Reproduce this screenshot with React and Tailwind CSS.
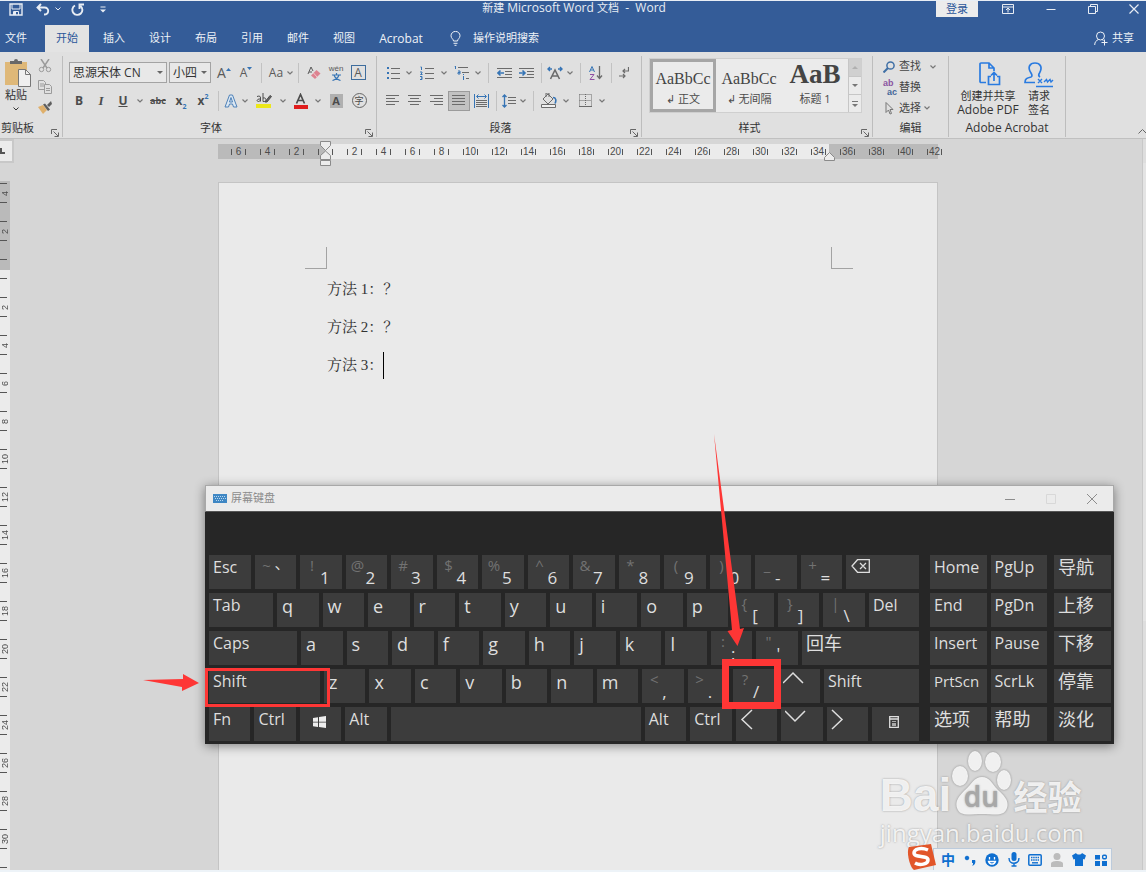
import React from 'react';

const RED = '#fe3635';
const H_MARKS = [6, 4, 2, 0, 2, 4, 6, 8, 10, 12, 14, 16, 18, 20, 22, 24, 26, 28, 30, 32, 34, 36, 38, 40, 42];
const V_MARKS = [4, 2, 0, 2, 4, 6, 8, 10, 12, 14, 16, 18, 20, 22, 24, 26, 28, 30, 32];
const TABS = ['插入', '设计', '布局', '引用', '邮件', '视图', 'Acrobat'];

// Small drawing helpers

function Icon({ w = 16, h = 16, children, className = '' }) {
  return (
    <svg
      width={w}
      height={h}
      viewBox={`0 0 ${w} ${h}`}
      fill="none"
      stroke="currentColor"
      aria-hidden="true"
      className={`shrink-0 ${className}`}
    >
      {children}
    </svg>
  );
}

function Chev({ className = 'w-3', label = '更多' }) {
  return (
    <button type="button" aria-label={label} className={`flex h-5 shrink-0 items-center justify-center text-[#777] ${className}`}>
      <Icon w={6} h={4}><path d="M.5 .5 3 3 5.500 .5" strokeWidth="1.200" /></Icon>
    </button>
  );
}

function Sep() {
  return <span className="mx-1 h-5 w-px shrink-0 bg-[#c2c2c2]" />;
}

function Tool({ label, className = 'w-[22px]', children }) {
  return (
    <button type="button" aria-label={label} className={`flex h-5 shrink-0 items-center justify-center ${className}`}>
      {children}
    </button>
  );
}

function Lines({ rows, color = '#6b6b6b' }) {
  return (
    <Icon w={14} h={14} className="block">
      <g stroke={color}>
        {rows.map(([x1, x2], i) => (
          <path key={i} d={`M${x1} ${1.5 + i * 3}H${x2}`} />
        ))}
      </g>
    </Icon>
  );
}

function Group({ label, className, launcher, children }) {
  return (
    <section aria-label={label} className={`relative flex shrink-0 flex-col border-r border-[#bdbdbd] ${className}`}>
      <div className="h-[63px]">{children}</div>
      <div className="flex h-[18px] items-center justify-center text-[11px] text-[#333]">{label}</div>
      {launcher && (
        <button type="button" aria-label={`${label}设置`} className="absolute right-[3px] bottom-0 text-[#666]">
          <Icon w={8} h={8}><path d="M.5 5V.5H6M2.500 2.500 7 7M7.500 3.500v4h-4" /></Icon>
        </button>
      )}
    </section>
  );
}

// Title bar and tabs

function TitleBar() {
  return (
    <header className="flex h-[25px] items-start border-t border-[#e8eef5] text-[#e8edf4]">
      <div className="flex h-4 flex-1 items-center pl-[9px]">
        <button type="button" aria-label="保存" className="w-[27px]">
          <Icon w={14} h={13} className="block">
            <path d="M1 1h12v11H1z" strokeWidth="1.400" />
            <path d="M3 1v5h8V1M4.500 12V8.500h5V12" />
            <path d="M5 9h2v3H5z" fill="currentColor" stroke="none" />
          </Icon>
        </button>
        <button type="button" aria-label="撤消" className="w-4">
          <Icon w={14} h={13} className="block">
            <path d="M5 1 1.500 4.500 5 8M2 4.500h6.500c5 0 5 7-.5 7" strokeWidth="1.900" />
          </Icon>
        </button>
        <button type="button" aria-label="撤消列表" className="w-[19px] pl-[3px]">
          <Icon w={6} h={4}><path d="M.5 .5 3 3 5.500 .5" /></Icon>
        </button>
        <button type="button" aria-label="重复" className="w-[29px]">
          <Icon w={13} h={13} className="block">
            <path d="M4 2.500a5 5 0 1 0 5.500 .5M8.500 6V1.500H13" strokeWidth="1.900" />
          </Icon>
        </button>
        <button type="button" aria-label="自定义快速访问工具栏">
          <Icon w={6} h={7} className="block">
            <path d="M.5 1H5.500" />
            <path d="M0 3.500h6L3 6.500z" fill="currentColor" stroke="none" />
          </Icon>
        </button>
      </div>
      <h1 className="h-4 text-[12px] leading-[13px] whitespace-pre">
        <span className="text-[11px]">新建</span> Microsoft Word <span className="text-[11px]">文档</span>{'  -  '}Word
      </h1>
      <div className="flex h-4 flex-1 items-center justify-end pr-[7px]">
        <button type="button" className="mr-6 h-4 w-[42px] bg-[#ececec] text-[11px] leading-[14px] text-[#2b579a]">登录</button>
        <button type="button" aria-label="功能区显示选项" className="w-11">
          <Icon w={12} h={10}>
            <path d="M.5 .5h11v9H.5zM.5 3h11M6 8.500V4.500M4 6l2-2 2 2" />
          </Icon>
        </button>
        <button type="button" aria-label="最小化" className="w-[42px]">
          <Icon w={10} h={10}><path d="M.5 5.500h9" /></Icon>
        </button>
        <button type="button" aria-label="还原" className="w-[41px]">
          <Icon w={10} h={10}><path d="M.5 2.500h7v7h-7zM2.500 2V.5h7v7H8" /></Icon>
        </button>
        <button type="button" aria-label="关闭">
          <Icon w={10} h={10}><path d="m.5 .5 9 9M9.500 .5l-9 9" strokeWidth="1.200" /></Icon>
        </button>
      </div>
    </header>
  );
}

function TabRow() {
  return (
    <nav className="flex h-[27px] items-stretch text-[11px] text-[#eef2f7]">
      <button type="button" className="w-[45px] pr-[13px] text-center">文件</button>
      <button type="button" className="mr-[2px] w-[44px] bg-[#e3e3e3] text-[#2b579a]">开始</button>
      {TABS.map((t) => (
        <button type="button" key={t} className={t === 'Acrobat' ? 'w-[68px] text-[12px]' : 'w-[46px]'}>{t}</button>
      ))}
      <label className="ml-[15px] flex items-center gap-3">
        <Icon w={11} h={15}>
          <path d="M3.500 10C3.500 8 1 7.500 1 4.700a4.500 4.300 0 0 1 9 0C10 7.500 7.500 8 7.500 10zM3.500 12.300h4M4.500 14.300h2" />
        </Icon>
        <input
          aria-label="操作说明搜索"
          placeholder="操作说明搜索"
          className="w-24 bg-transparent outline-none placeholder:text-[#eef2f7]"
        />
      </label>
      <button type="button" className="ml-auto flex items-center gap-1 pr-3">
        <Icon w={14} h={15}>
          <circle cx="6.500" cy="5" r="4" />
          <path d="M.7 14c0-3 1.500-4.500 3.800-5.500M8 8.500l1.500 1M10.500 8.500v6M7.500 11.500h6" />
        </Icon>
        共享
      </button>
    </nav>
  );
}

// Ribbon groups

function ClipboardGroup() {
  return (
    <Group label="剪贴板" className="w-[63px] [&>div:nth-child(2)]:justify-start [&>div:nth-child(2)]:pl-[1px]" launcher>
      <div className="flex">
        <button type="button" className="flex w-8 flex-col items-center pt-[3px] text-[11px] leading-4 text-[#333]">
          <Icon w={26} h={28} className="ml-1 block">
            <path d="M0 3h22v23H0z" fill="#dfb878" stroke="none" />
            <path d="M5 5V2h4a2 2 0 0 1 4 0h4v3z" fill="#686868" stroke="none" />
            <path d="M13.500 10.500h7l5 5v12h-12z" fill="#efefef" stroke="#777" />
            <path d="M20.500 10.500v5h5" stroke="#777" />
          </Icon>
          <span>粘贴</span>
          <Icon w={6} h={4} className="mt-1"><path d="M.5 .5 3 3 5.500 .5" /></Icon>
        </button>
        <div className="flex flex-col gap-[7px] pt-[3px] pl-[6px] text-[#9b9b9b]">
          <button type="button" aria-label="剪切">
            <Icon w={14} h={14} className="block">
              <path d="M3 0l6 9M11 0 5 9" strokeWidth="1.500" />
              <circle cx="3.500" cy="10.500" r="2.200" />
              <circle cx="10.500" cy="10.500" r="2.200" />
            </Icon>
          </button>
          <button type="button" aria-label="复制">
            <Icon w={14} h={14} className="block">
              <path d="M.5 .5h5l2 2v7h-7zM2 4h4M2 6h4" />
              <path d="M6.500 4.500h5l2 2v7h-7zM8 8.500h4M8 10.500h4" fill="#e0e0e0" />
            </Icon>
          </button>
          <button type="button" aria-label="格式刷">
            <Icon w={14} h={13} className="block">
              <path d="m0 6 5-2 4 5-4 4z" fill="#dfb06c" stroke="none" />
              <path d="m5 3.500 2-1 5 6-2 1.500zM9 4l4-4 1 3-3 3z" fill="#5e5e5e" stroke="none" />
            </Icon>
          </button>
        </div>
      </div>
    </Group>
  );
}

function SelectBox({ label, value, className }) {
  return (
    <div className={`relative shrink-0 ${className}`}>
      <select aria-label={label} className="block h-[21px] w-full appearance-none border border-[#a3a3a3] bg-[#e8e8e8] pl-[3px] text-[12px] leading-[18px] text-[#333]">
        <option>{value}</option>
      </select>
      <svg width="6" height="4" className="pointer-events-none absolute top-[9px] right-1"><path d="M0 0h6L3 3z" fill="#666" /></svg>
    </div>
  );
}

function FontGroup() {
  return (
    <Group label="字体" className="w-[314px] [&>div:nth-child(2)]:pr-[17px]" launcher>
      <div className="flex h-[29px] items-center pt-1 pl-[6px] text-[#5a5a5a]">
        <SelectBox label="字体名称" value="思源宋体 CN" className="w-[98px]" />
        <SelectBox label="字号" value="小四" className="ml-[2px] w-[42px]" />
        <Tool label="增大字号" className="ml-[2px] w-[22px] text-[14px]">
          A<Icon w={5} h={10}><path d="M0 3h5L2.500 0z" fill="#3674b5" stroke="none" /></Icon>
        </Tool>
        <Tool label="减小字号" className="w-[22px] text-[12px]">
          A<Icon w={5} h={12}><path d="M0 0h5L2.500 3z" fill="#3674b5" stroke="none" /></Icon>
        </Tool>
        <Sep />
        <Tool label="更改大小写" className="w-5 text-[12px]">Aa</Tool>
        <Chev className="w-2" />
        <Sep />
        <Tool label="清除所有格式">
          <Icon w={14} h={14}>
            <path d="M1 8 4 1l2 4M2 6h3" />
            <path d="M4 9.500 9.500 4l4 3.500L8 13z" fill="#dd8290" stroke="none" />
            <path d="m6.500 7 3.500 4" stroke="#f1c6cc" />
          </Icon>
        </Tool>
        <Tool label="拼音指南" className="w-[22px] flex-col">
          <span className="font-['Liberation_Sans',sans-serif] text-[8px] leading-[9px]">wén</span>
          <Icon w={9} h={8}>
            <path d="M4.500 0v1.500M0 2h9M2 2c1 3 3 4.500 6.500 5.500M7 2C6 5 4 6.500 .5 7.500" stroke="#3674b5" strokeWidth="1.200" />
          </Icon>
        </Tool>
        <Tool label="字符边框">
          <span className="h-[15px] w-[15px] border border-[#3e6d9d] text-center text-[12px] leading-[13px]">A</span>
        </Tool>
      </div>
      <div className="flex h-[31px] items-center pl-[5px] text-[#4c4c4c]">
        <Tool label="加粗" className="w-[22px] text-[12px] font-bold">B</Tool>
        <Tool label="倾斜" className="w-[22px] font-['Liberation_Serif',serif] text-[13px] font-bold italic">I</Tool>
        <Tool label="下划线" className="w-[22px] text-[12px] font-bold underline">U</Tool>
        <Chev />
        <Tool label="删除线" className="w-6 text-[9px] font-bold line-through">abc</Tool>
        <Tool label="下标" className="w-[22px] text-[12px] font-bold">
          x<span className="self-end text-[7px] leading-[9px] text-[#3674b5]">2</span>
        </Tool>
        <Tool label="上标" className="w-[22px] text-[12px] font-bold">
          x<span className="self-start text-[7px] leading-[12px] text-[#3674b5]">2</span>
        </Tool>
        <Sep />
        <Tool label="文本效果" className="w-4">
          <Icon w={14} h={14}>
            <path d="M1 13 5.500 1h3L13 13H9.500l-1-3h-3l-1 3z" stroke="#4e81b8" fill="#dce8f3" />
            <path d="M5.500 8 7 3.500 8.500 8z" stroke="#4e81b8" />
          </Icon>
        </Tool>
        <Chev />
        <Tool label="突出显示" className="w-[26px]">
          <Icon w={16} h={15}>
            <path d="M1 3.500c3-1 3.500 0 3.500 1.500v3.500M4.500 6C1 5.500 0 8.500 2.500 8.500L4.500 7.500M7 0v8.500c4 1 4-4.500 0-3.500" />
            <path d="m9 9 5-6.500 1.500 1L11 9z" fill="#666" />
            <path d="M0 11h15v4H0z" fill="#ece71a" stroke="none" />
          </Icon>
        </Tool>
        <Chev />
        <Tool label="字体颜色" className="w-6">
          <Icon w={14} h={16}>
            <path d="m2.500 10.500 4-9 4 9M4 7.500h5" strokeWidth="1.700" />
            <path d="M0 12h14v4H0z" fill="#e01d1d" stroke="none" />
          </Icon>
        </Tool>
        <Chev className="w-[10px]" />
        <Tool label="字符底纹" className="w-[26px]">
          <span className="h-[14px] w-[13px] bg-[#b0b0b0] text-center text-[11px] leading-[14px] font-bold">A</span>
        </Tool>
        <Tool label="带圈字符" className="w-5">
          <span className="h-[15px] w-[15px] rounded-full border border-[#666] text-center text-[9px] leading-[13px]">字</span>
        </Tool>
      </div>
    </Group>
  );
}

function ParagraphGroup() {
  return (
    <Group label="段落" className="w-[265px] [&>div:nth-child(2)]:pr-[17px]" launcher>
      <div className="flex h-[29px] items-center pt-1 pl-[7px] text-[#6b6b6b]">
        <Tool label="项目符号" className="w-[18px]">
          <Icon w={13} h={14}>
            <path d="M0 1h2v2H0zM0 6h2v2H0zM0 11h2v2H0z" fill="#3674b5" stroke="none" />
            <path d="M4 2.500h9M4 7.500h9M4 12.500h9" />
          </Icon>
        </Tool>
        <Chev className="w-[14px]" />
        <Tool label="编号">
          <Icon w={14} h={14}>
            <path d="M.5 1h1v3M0 6h2v1L.5 8.500H2.500M0 10.500h2v3H0M2 12H1" stroke="#3674b5" />
            <path d="M5 2.500h9M5 7.500h9M5 12.500h9" />
          </Icon>
        </Tool>
        <Chev className="w-3" />
        <Tool label="多级列表">
          <Icon w={15} h={14}>
            <path d="M.5 0h1v3M4 5h2v3H4V6.500h2M9.500 10v4M9.500 8v1" stroke="#3674b5" />
            <path d="M4 1.500h10M8 6.500h7M12 12.500h3" />
          </Icon>
        </Tool>
        <Chev className="w-3" />
        <Sep />
        <Tool label="减少缩进量">
          <Icon w={15} h={12}>
            <path d="M0 1.500h15M8 4.500h7M8 7.500h7M0 10.500h15" />
            <path d="M1 6h6M3.500 3.500 1 6l2.500 2.500" stroke="#3674b5" strokeWidth="1.600" />
          </Icon>
        </Tool>
        <Tool label="增加缩进量">
          <Icon w={15} h={12}>
            <path d="M0 1.500h15M8 4.500h7M8 7.500h7M0 10.500h15" />
            <path d="M0 6h6M3.500 3.500 6 6 3.500 8.500" stroke="#3674b5" strokeWidth="1.600" />
          </Icon>
        </Tool>
        <Sep />
        <Tool label="中文版式" className="w-[18px]">
          <Icon w={16} h={14}>
            <path d="m3.500 13 4.500-9 4.500 9M5 10h6" strokeWidth="1.600" />
            <path d="M5 3H1M3 1 1 3l2 2M11 3h4M13 1l2 2-2 2" stroke="#3674b5" strokeWidth="1.400" />
          </Icon>
        </Tool>
        <Chev />
        <Sep />
        <Tool label="排序">
          <Icon w={14} h={14}>
            <path d="m.5 6 2.500-5.500L5.500 6M1.500 4h3" stroke="#3674b5" />
            <path d="M1 8.500h4l-4 5h4.500" stroke="#8f4fa3" />
            <path d="M10.500 0v12M8 9.500l2.500 3 2.500-3" strokeWidth="1.300" />
          </Icon>
        </Tool>
        <Sep />
        <Tool label="显示编辑标记" className="w-4">
          <Icon w={10} h={12}>
            <path d="M9.500 0v4H4M6 2 4 4l2 2M0 9h6M4 7l2 2-2 2" strokeWidth="1.200" />
          </Icon>
        </Tool>
      </div>
      <div className="flex h-[31px] items-center pl-[5px] text-[#6b6b6b]">
        <Tool label="左对齐"><Lines rows={[[0, 13], [0, 9], [0, 13], [0, 9]]} /></Tool>
        <Tool label="居中"><Lines rows={[[0, 13], [2, 11], [0, 13], [2, 11]]} /></Tool>
        <Tool label="右对齐"><Lines rows={[[0, 13], [4, 13], [0, 13], [4, 13]]} /></Tool>
        <Tool label="两端对齐" className="w-[22px] border border-[#9b9b9b] bg-[#c2c2c2]">
          <Lines rows={[[0, 13], [0, 13], [0, 13], [0, 13]]} />
        </Tool>
        <Tool label="分散对齐">
          <Icon w={15} h={14}>
            <path d="M.5 0v14M14.500 0v14M3 2.500h9M4.500 .5l-2 2 2 2M10.500 .5l2 2-2 2" stroke="#3674b5" />
            <path d="M2 6.500h11M2 8.500h11M2 10.500h11M2 12.500h11" />
          </Icon>
        </Tool>
        <Sep />
        <Tool label="行距" className="w-4">
          <Icon w={14} h={14}>
            <path d="M2.500 1v12M.5 3l2-2 2 2M.5 11l2 2 2-2" stroke="#3674b5" strokeWidth="1.300" />
            <path d="M6 3.500h8M6 6.500h8M6 9.500h8" />
          </Icon>
        </Tool>
        <Chev />
        <Sep />
        <Tool label="底纹">
          <Icon w={16} h={15}>
            <path d="m2 6 5-5 5 5-5 5zM5 4V0h3v4" />
            <path d="M12 4.500c3 0 3.500 3 2 6" stroke="#3674b5" strokeWidth="1.600" />
            <path d="M.5 11.500h14v3H.5z" fill="#f0f0f0" />
          </Icon>
        </Tool>
        <Chev />
        <Tool label="边框" className="w-[26px]">
          <Icon w={13} h={13}>
            <path d="M.5 .5h12M.5 .5v12M12.500 .5v12M6.500 0v12M.5 6.500h12" strokeDasharray="1 1" />
            <path d="M0 12.500h13" />
          </Icon>
        </Tool>
        <Chev className="w-2" />
      </div>
    </Group>
  );
}

function StyleCard({ sample, name, big, selected }) {
  return (
    <button
      type="button"
      className={`flex h-[53px] w-[66px] flex-col items-center border-3 ${selected ? 'border-[#a6a6a6]' : 'border-transparent'}`}
    >
      <span
        className={`flex h-[29px] shrink-0 items-center font-['Liberation_Serif',serif] leading-none whitespace-nowrap text-[#444] ${big ? 'pb-1 text-[27px] font-bold' : 'pt-1 text-[16px]'}`}
      >
        {sample}
      </span>
      <span className="text-[11px] leading-4 whitespace-nowrap text-[#4a4a4a]">{name}</span>
    </button>
  );
}

function StylesGroup() {
  return (
    <Group label="样式" className="w-[231px] [&>div:nth-child(2)]:pr-[15px]" launcher>
      <div className="mt-[2px] ml-[7px] flex w-[213px] border border-[#cfcfcf] bg-[#ebebeb]">
        <StyleCard sample="AaBbCc" name="↲ 正文" selected />
        <StyleCard sample="AaBbCc" name="↲ 无间隔" />
        <StyleCard sample="AaB" name="标题 1" big />
        <div className="flex flex-1 flex-col divide-y divide-[#c6c6c6] border-l border-[#c6c6c6] text-[#777]">
          <button type="button" aria-label="上一行" className="flex flex-1 items-center justify-center bg-[#d0d0d0] text-[#b0b0b0]">
            <Icon w={6} h={3}><path d="M0 3h6L3 0z" fill="currentColor" stroke="none" /></Icon>
          </button>
          <button type="button" aria-label="下一行" className="flex flex-1 items-center justify-center">
            <Icon w={6} h={3}><path d="M0 0h6L3 3z" fill="currentColor" stroke="none" /></Icon>
          </button>
          <button type="button" aria-label="其他样式" className="flex flex-1 items-center justify-center">
            <Icon w={6} h={6}><path d="M0 .5h6" /><path d="M0 3h6L3 6z" fill="currentColor" stroke="none" /></Icon>
          </button>
        </div>
      </div>
    </Group>
  );
}

function EditGroup() {
  return (
    <Group label="编辑" className="w-[76px]">
      <div className="flex flex-col pl-[10px] text-[11px] text-[#444]">
        <div className="flex h-[21px] items-center">
          <button type="button" className="flex items-center gap-1">
            <Icon w={12} h={12}>
              <circle cx="7.500" cy="4.500" r="3.600" stroke="#3f6fa5" strokeWidth="1.500" />
              <path d="m5 7-4.500 4.500" stroke="#3f6fa5" strokeWidth="2" />
            </Icon>
            查找
          </button>
          <Chev className="ml-[6px] w-3" />
        </div>
        <button type="button" className="flex h-[21px] items-center gap-[2px]">
          <span className="w-[14px] font-['Liberation_Sans',sans-serif] text-[9px] leading-[9px] font-bold">
            <span className="block text-left text-[#8b55a0]">ab</span>
            <span className="block text-right text-[#44679a]">ac</span>
          </span>
          替换
        </button>
        <div className="flex h-5 items-center">
          <button type="button" className="flex items-center gap-1">
            <Icon w={12} h={13}>
              <path d="M3 .5v10l2.500-2.500L7 12l1.500-.5-1.500-4h3z" stroke="#777" />
            </Icon>
            选择
          </button>
          <Chev />
        </div>
      </div>
    </Group>
  );
}

function AcrobatGroup() {
  return (
    <Group label="Adobe Acrobat" className="w-[117px] [&>div:nth-child(2)]:text-[12px]">
      <div className="flex pt-[6px] pl-[9px] text-[11px] leading-[14px] text-[#333]">
        <button type="button" className="flex w-[60px] flex-col items-center">
          <Icon w={22} h={24} className="mb-[3px] ml-1 block text-[#2a7be0]">
            <path d="M7 20.500H2A1 1 0 0 1 1 19.500V2a1 1 0 0 1 1-1h8l5 5v3M10 1v5h5" strokeWidth="1.700" />
            <path d="M12 14.500H9.500v8h11v-8H18M15 19v-8M12 13.500l3-3 3 3" strokeWidth="1.700" />
          </Icon>
          <span className="whitespace-nowrap">创建并共享</span>
          <span className="text-[12px] whitespace-nowrap">Adobe PDF</span>
        </button>
        <button type="button" className="ml-[6px] flex w-[30px] flex-col items-center">
          <Icon w={30} h={27} className="block text-[#2a7be0]">
            <path d="M11 20.500H1c0-4 2-4.500 6-5.500 1.500-.5 1-2.500 0-4C3 5 6 1 11 1s8 4 4.500 10c-1 1.500-1 3 .5 4" strokeWidth="1.700" />
            <path d="m14 17 4 4M18 17l-4 4M20 20l2.500-2.500 1 2.500 2.500-2.500 1 2.500 2-2M12 24.500h17" strokeWidth="1.400" />
          </Icon>
          <span>请求</span>
          <span>签名</span>
        </button>
      </div>
    </Group>
  );
}

function Ribbon() {
  return (
    <div className="relative flex h-[87px] items-start border-b border-[#c0c0c0] bg-[#e0e0e0] pt-1">
      <ClipboardGroup />
      <FontGroup />
      <ParagraphGroup />
      <StylesGroup />
      <EditGroup />
      <AcrobatGroup />
      <button type="button" aria-label="折叠功能区" className="mr-[-1px] ml-auto self-end pb-1 text-[#666]">
        <Icon w={9} h={5} className="block"><path d="m.5 4.500 4-4 4 4" /></Icon>
      </button>
    </div>
  );
}

// Document area

function HorizontalRuler() {
  return (
    <div className="relative mt-[5px] flex h-[15px] bg-[linear-gradient(to_right,#bababa_108px,#ebebeb_108px,#ebebeb_611px,#bababa_611px)] pl-[6px] font-['Liberation_Sans',sans-serif] text-[10px] text-[#4c4c4c]">
      {H_MARKS.map((n, i) => (
        <span key={i} className="flex w-[29px] shrink-0 items-center justify-center">
          <span className="flex h-[6px] w-[15px] items-center justify-center border-x border-[#555] leading-none">
            {n || ''}
          </span>
        </span>
      ))}
      <svg width="11" height="26" className="absolute top-[-3px] left-[102px]" fill="#ececec" stroke="#8a8a8a">
        <path d="M.5 .5h10v4l-5 5-5-5zM.5 18.500v-4l5-4.500 5 4.500v4zM.5 19.500h10v5H.5z" />
      </svg>
      <svg width="11" height="10" className="absolute top-[8px] left-[606px]" fill="#ececec" stroke="#8a8a8a">
        <path d="M.5 8.500v-3l5-5 5 5v3z" />
      </svg>
    </div>
  );
}

function VerticalRuler() {
  return (
    <div className="mt-[18px] min-h-0 w-[10px] flex-1 overflow-hidden bg-[linear-gradient(#bababa_89px,#ebebeb_89px)] font-['Liberation_Sans',sans-serif] text-[9px] text-[#4c4c4c]">
      <div className="-mt-[7px]">
        {V_MARKS.map((n, i) => (
          <div key={i} className="flex h-[38px] items-center">
            <div className="flex h-5 w-[7px] items-center border-y border-[#555]">
              <span className="h-3 w-[10px] shrink-0 rotate-180 text-center leading-[10px] [writing-mode:vertical-rl]">{n || ''}</span>
            </div>
          </div>
        ))}
      </div>
    </div>
  );
}

function Workspace() {
  return (
    <main className="flex min-h-0 flex-1 bg-[#d6d6d6]">
      <div className="flex w-[14px] shrink-0 flex-col">
        <button type="button" aria-label="制表符" className="flex h-6 items-center border-2 border-l-0 border-[#c8c8c8] bg-[#ebebeb] text-[#555]">
          <Icon w={6} h={6}><path d="M1 0v5h4" strokeWidth="2" /></Icon>
        </button>
        <VerticalRuler />
      </div>
      <div className="mx-auto flex w-full max-w-[720px] flex-col">
        <HorizontalRuler />
        <article className="mt-[23px] flex-1 border border-b-0 border-[#c4c4c4] bg-[#eaeaea] pt-16">
          <div className="flex justify-between pr-[84px] pl-[86px]">
            <span className="h-[22px] w-[22px] border-r border-b border-[#a3a3a3]" />
            <span className="h-[22px] w-[22px] border-b border-l border-[#a3a3a3]" />
          </div>
          <div className="px-[108px] pt-px font-['Liberation_Serif','Noto_Serif_CJK_SC','Noto_Sans_CJK_SC',serif] text-[15px] leading-[38px] text-[#333]">
            <p>方法 1：？</p>
            <p>方法 2：？</p>
            <p className="flex items-center">
              方法 3：<span className="h-[27px] w-px bg-black" />
            </p>
          </div>
        </article>
      </div>
      <div className="w-1 shrink-0 border-l border-[#c8c8c8] bg-[#dedede]">
        <div className="mt-6 h-[458px] bg-[#e4e4e4]" />
      </div>
    </main>
  );
}

// On-screen keyboard

function Key({ children, className = 'flex-1' }) {
  return (
    <button type="button" className={`flex h-[34px] min-w-0 items-start bg-[#3c3c3c] pl-1 text-[16px] leading-6 whitespace-nowrap text-[#dedede] ${className}`}>
      {children}
    </button>
  );
}

function Letter({ children }) {
  return <Key><span className="pl-px text-[18px] leading-[26px]">{children}</span></Key>;
}

function DualKey({ upper, lower, high }) {
  return (
    <Key>
      <span className="w-4 shrink-0 text-[15px] leading-5 text-[#727272]">{upper}</span>
      <span className={high ? 'text-[15px] leading-4' : 'self-end pb-px text-[17px] leading-5'}>{lower}</span>
    </Key>
  );
}

function CjkKey({ children, className }) {
  return <Key className={className}><span className="text-[18px]">{children}</span></Key>;
}

function Arrow({ d, label }) {
  return (
    <Key>
      <svg width="22" height="24" fill="none" stroke="#dedede" strokeWidth="1.500" role="img" aria-label={label}>
        <path d={d} />
      </svg>
    </Key>
  );
}

const NUMBER_ROW = [['!', '1'], ['@', '2'], ['#', '3'], ['$', '4'], ['%', '5'], ['^', '6'], ['&', '7'], ['*', '8'], ['(', '9'], [')', '0'], ['_', '-'], ['+', '=']];

function KeyRow({ children }) {
  return <div className="flex gap-1">{children}</div>;
}

function Keyboard() {
  return (
    <section aria-label="屏幕键盘" className="absolute top-[485px] left-[205px] w-[909px] bg-[#262626] shadow-[0_2px_10px_rgba(0,0,0,0.45)]">
      <header className="flex h-[27px] items-center border border-[#a8a8a8] border-b-[#555] bg-[#ebebeb] pl-[7px] text-[11px] text-[#8c8c8c]">
        <Icon w={14} h={9}>
          <path d="M0 0h14v9H0z" fill="#3f87c4" stroke="none" />
          <path d="M1 2.500h12M2 4.500h11M3 6.500h8" stroke="#b8d7ee" strokeDasharray="1 1" />
        </Icon>
        <h2 className="ml-1">屏幕键盘</h2>
        <div className="ml-auto flex pr-4">
          <button type="button" aria-label="最小化" className="w-[41px]"><Icon w={10} h={10}><path d="M0 5.500h10" /></Icon></button>
          <button type="button" aria-label="最大化" className="w-[41px] text-[#d8d8d8]"><Icon w={10} h={10}><path d="M.5 .5h9v9h-9z" /></Icon></button>
          <button type="button" aria-label="关闭"><Icon w={10} h={10}><path d="m0 0 10 10M10 0 0 10" /></Icon></button>
        </div>
      </header>
      <div className="flex pt-[43px] pr-[3px] pb-[3px] pl-1">
        <div className="flex min-w-0 flex-1 flex-col gap-1">
          <KeyRow>
            <Key>Esc</Key>
            <DualKey upper="~" lower="、" high />
            {NUMBER_ROW.map(([u, l]) => <DualKey key={u} upper={u} lower={l} />)}
            <Key className="w-[73px] pt-1">
              <Icon w={22} h={14} className="ml-[1px]">
                <path d="M6.500 .7H18.300v12.600H6.500L1 7zM9 4l6 6M15 4l-6 6" strokeWidth="1.300" />
              </Icon>
            </Key>
          </KeyRow>
          <KeyRow>
            <Key className="w-16">Tab</Key>
            {[...'qwertyuiop'].map((c) => <Letter key={c}>{c}</Letter>)}
            <DualKey upper="{" lower="[" />
            <DualKey upper="}" lower="]" />
            <DualKey upper="|" lower="\" />
            <Key className="w-[50px]">Del</Key>
          </KeyRow>
          <KeyRow>
            <Key className="w-[88px]">Caps</Key>
            {[...'asdfghjkl'].map((c) => <Letter key={c}>{c}</Letter>)}
            <DualKey upper=":" lower=";" />
            <DualKey upper={'"'} lower="'" />
            <CjkKey className="w-[117px]">回车</CjkKey>
          </KeyRow>
          <KeyRow>
            <Key className="w-[111px]">Shift</Key>
            {[...'zxcvbnm'].map((c) => <Letter key={c}>{c}</Letter>)}
            <DualKey upper="<" lower="," />
            <DualKey upper=">" lower="." />
            <DualKey upper="?" lower="/" />
            <Arrow label="上" d="m0 14 10-10 10 10" />
            <Key className="w-[95px]">Shift</Key>
          </KeyRow>
          <KeyRow>
            <Key>Fn</Key>
            <Key>Ctrl</Key>
            <Key className="flex-1 justify-center pt-[9px]">
              <Icon w={13} h={12} className="mr-[6px]">
                <path d="m0 2 5-.8v4.500H0zM6 1l7-1v5.700H6zM0 6.500h5V11l-5-.8zM6 6.500h7V12l-7-1z" fill="#ededed" stroke="none" />
              </Icon>
            </Key>
            <Key>Alt</Key>
            <Key className="w-[250px]" />
            <Key>Alt</Key>
            <Key>Ctrl</Key>
            <Arrow label="左" d="M12 3 2 12.500 12 22" />
            <Arrow label="下" d="m0 4 10 10L20 4" />
            <Arrow label="右" d="m1 3 10 9.500L1 22" />
            <Key className="w-[47px] justify-center pt-[9px]">
              <Icon w={10} h={12} className="mr-[6px]">
                <path d="M.7 .7h8.600v10.600H.7zM.7 3h8.600" strokeWidth="1.300" />
                <path d="M3 5h4v1H3zM3 7h4v3H3z" fill="#aaa" stroke="none" />
              </Icon>
            </Key>
          </KeyRow>
        </div>
        <div className="ml-[11px] grid w-[117px] grid-cols-2 gap-1">
          <Key>Home</Key>
          <Key>PgUp</Key>
          <Key>End</Key>
          <Key>PgDn</Key>
          <Key>Insert</Key>
          <Key>Pause</Key>
          <Key><span className="text-[15px]">PrtScn</span></Key>
          <Key>ScrLk</Key>
          <CjkKey>选项</CjkKey>
          <CjkKey>帮助</CjkKey>
        </div>
        <div className="ml-[7px] flex w-[57px] flex-col gap-1">
          {['导航', '上移', '下移', '停靠', '淡化'].map((t) => <CjkKey key={t} className="w-full">{t}</CjkKey>)}
        </div>
      </div>
      {/* red frames around Shift and the ?/ key */}
      <span className="absolute top-[183px] left-0 h-[39px] w-[125px] border-3 border-[#fe3635]" />
      <span className="absolute top-[174px] left-[517px] h-[50px] w-[59px] border-7 border-[#fe3635]" />
      <svg width="30" height="213" className="absolute top-[-51px] left-[509px]">
        <path d="M0 0 26 195l4-1-6.500 18L13.500 197l4.500-1z" fill={RED} />
      </svg>
      <svg width="56" height="18" className="absolute top-[189px] left-[-62px]">
        <path d="M0 6 40 5V0l16 9-17 8v-4z" fill={RED} />
      </svg>
    </section>
  );
}

// Watermark and input method bar

function Watermark() {
  return (
    <div className="absolute right-[62px] bottom-[24px] flex flex-col text-white/85 [text-shadow:0_0_2px_rgba(110,110,110,0.7)]">
      <div className="flex h-[68px] items-end">
        <span className="font-['Liberation_Sans',sans-serif] text-[46px] leading-[46px] font-bold">Bai</span>
        <div className="relative h-[68px] w-[60px]">
          <svg width="60" height="66" className="drop-shadow-[0_0_1px_#888]" fill="rgba(245,245,245,0.95)">
            <ellipse cx="9" cy="26" rx="8" ry="10" />
            <ellipse cx="24" cy="11" rx="7" ry="10" />
            <ellipse cx="42" cy="12" rx="8" ry="10" />
            <ellipse cx="53" cy="30" rx="7" ry="10" />
            <path d="M31 27c8 0 10 7 16 13 8 7 11 12 9 18-3 9-12 6-25 6S9 67 6 58c-2-6 1-11 8-18 7-6 9-13 17-13z" />
          </svg>
          <span className="absolute inset-x-0 bottom-[6px] text-center text-[28px] leading-8 font-semibold text-[#a8a8a8]">du</span>
        </div>
        <span className="ml-[2px] text-[34px] leading-[42px] font-bold">经验</span>
      </div>
      <span className="text-[24px] leading-[30px]">jingyan.baidu.com</span>
    </div>
  );
}

function InputBar() {
  return (
    <div className="absolute right-[34px] bottom-[2px] flex h-[22px] w-[179px] items-center justify-between border border-b-0 border-[#bccbdc] bg-[#f0f1f2] pr-1 pl-[7px] text-[#0f6fd0]">
      <svg width="29" height="26" className="absolute bottom-0 left-[-27px]" fill="none">
        <path d="M2 3 24 0l5 21-22 5C3 24-1 8 2 3z" fill="#e2562a" />
        <path d="M21 6C14 3 7 5 7 9c0 5 14 2 14 7 0 4-8 6-13 3" stroke="#fff" strokeWidth="3.500" />
      </svg>
      <button type="button" className="text-[14px] font-bold">中</button>
      <button type="button" aria-label="标点">
        <Icon w={12} h={12} className="block">
          <circle cx="3" cy="4" r="1.800" fill="currentColor" />
          <path d="M8 6h3c1 2 0 5-3 6 1-1 1-2 1-3H8z" fill="currentColor" stroke="none" />
        </Icon>
      </button>
      <button type="button" aria-label="表情">
        <Icon w={14} h={14} className="block">
          <circle cx="7" cy="7" r="6.700" fill="currentColor" stroke="none" />
          <path d="M4.500 4v2.500M9.500 4v2.500M3.500 8.500c1 3.500 6 3.500 7 0z" stroke="#fff" strokeWidth="1.300" />
        </Icon>
      </button>
      <button type="button" aria-label="语音">
        <Icon w={12} h={15} className="block">
          <rect x="3.500" y="0" width="5" height="9" rx="2.500" fill="currentColor" stroke="none" />
          <path d="M1 6c0 7 10 7 10 0M6 11v3M3.500 14h5" strokeWidth="1.400" />
        </Icon>
      </button>
      <button type="button" aria-label="软键盘">
        <Icon w={14} h={12} className="block">
          <rect x=".8" y=".8" width="12.400" height="10.400" rx="1" strokeWidth="1.500" />
          <path d="M3 3.500h8M3 6h8" strokeWidth="1.500" strokeDasharray="1.500 .7" />
          <path d="M4 8.800h6" strokeWidth="1.400" />
        </Icon>
      </button>
      <button type="button" aria-label="账户" className="text-[#bcbcbc]">
        <Icon w={12} h={14} className="block">
          <circle cx="6" cy="3.500" r="3.500" fill="currentColor" stroke="none" />
          <path d="M0 14V10.500C0 7 12 7 12 10.500V14z" fill="currentColor" stroke="none" />
        </Icon>
      </button>
      <button type="button" aria-label="皮肤">
        <Icon w={14} h={13} className="block">
          <path d="M4 0c1 2 5 2 6 0l4 2.500-1.500 4L11 6v7H3V6l-1.500 .5L0 2.500z" fill="currentColor" stroke="none" />
        </Icon>
      </button>
      <button type="button" aria-label="工具箱">
        <Icon w={12} h={12} className="block">
          <path d="M0 1h5v4.500H0zM0 7h5v5H0zM7 7h5v5H7z" fill="currentColor" stroke="none" />
          <rect x="7.700" y="1.200" width="3.600" height="3.600" rx="1" strokeWidth="1.400" />
        </Icon>
      </button>
    </div>
  );
}

function App() {
  return (
    <div className="relative flex h-screen flex-col overflow-hidden bg-[#345c98] font-['Open_Sans','Noto_Sans_CJK_SC',sans-serif]">
      <TitleBar />
      <TabRow />
      <Ribbon />
      <Workspace />
      <div className="h-[2px] shrink-0 bg-[#edf3f8]" />
      <Keyboard />
      <Watermark />
      <InputBar />
    </div>
  );
}

export default App;
